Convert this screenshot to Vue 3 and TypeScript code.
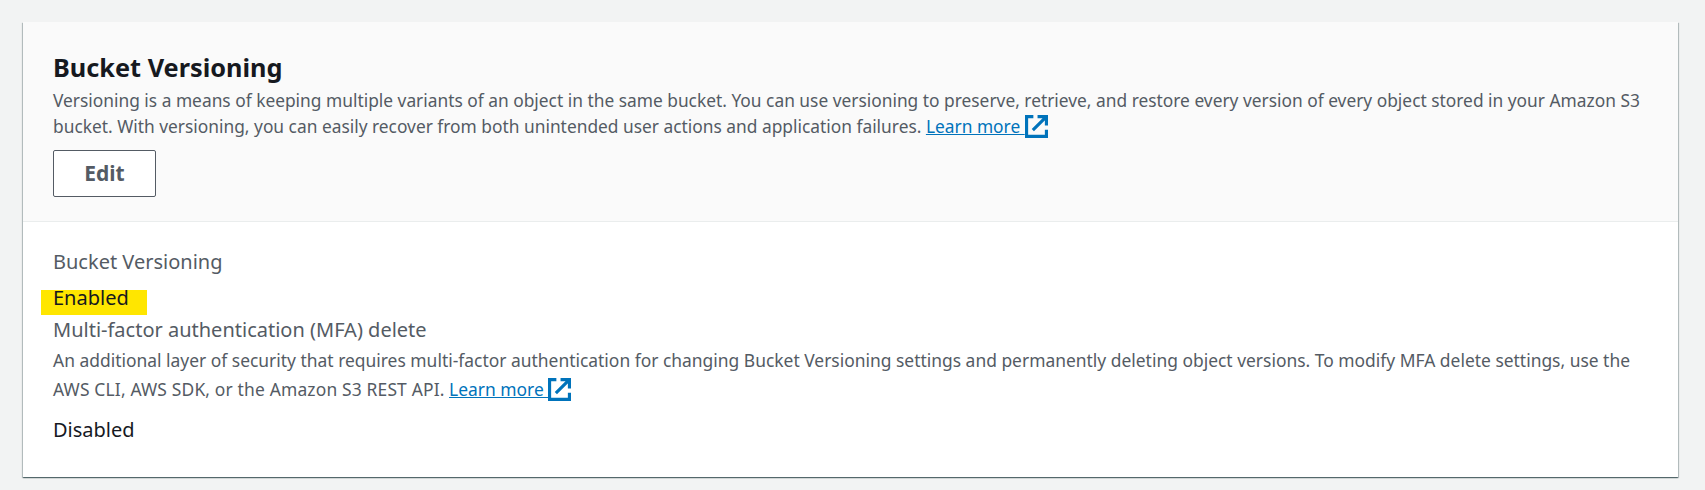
<script setup lang="ts">
const versioningText = 'Versioning is a means of keeping multiple variants of an object in the same bucket. You can use versioning to preserve, retrieve, and restore every version of every object stored in your Amazon S3 bucket. With versioning, you can easily recover from both unintended user actions and application failures.'
const mfaText = 'An additional layer of security that requires multi-factor authentication for changing Bucket Versioning settings and permanently deleting object versions. To modify MFA delete settings, use the'
const mfaTail = 'AWS CLI, AWS SDK, or the Amazon S3 REST API.'
</script>

<template>
  <div class="page">
    <section class="card">
      <header class="head">
        <h2 class="title">Bucket Versioning</h2>
        <p class="desc">{{ versioningText }} <a class="link">Learn more&nbsp;</a><svg class="ext" viewBox="0 0 22 22"><path d="M8 1.500H1.500v19h19V14M12 1.500h8.500V10M20 2 7.500 14.500" /></svg></p>
        <button class="edit">Edit</button>
      </header>
      <div class="body">
        <div class="label">Bucket Versioning</div>
        <div class="value"><span class="mark"></span><span class="marked">Enabled</span></div>
        <div class="label mfa">Multi-factor authentication (MFA) delete</div>
        <p class="desc small">{{ mfaText }} <span class="caps">{{ mfaTail }}</span> <a class="link">Learn more&nbsp;</a><svg class="ext" viewBox="0 0 22 22"><path d="M8 1.500H1.500v19h19V14M12 1.500h8.500V10M20 2 7.500 14.500" /></svg></p>
        <div class="value last">Disabled</div>
      </div>
    </section>
  </div>
</template>

<style>
html, body { margin: 0; background: #f2f3f3; }
</style>

<style scoped>
.page {
  width: 1705px;
  height: 490px;
  box-sizing: border-box;
  padding: 22px 27px 0 23px;
  background: #f2f3f3;
  font-family: "Noto Sans", sans-serif;
  overflow: hidden;
}
.card {
  height: 455px;
  background: #fff;
  box-shadow: 0 1px 1px 0 rgba(0, 28, 36, 0.45), 1px 1px 1px 0 rgba(0, 28, 36, 0.2), -1px 1px 1px 0 rgba(0, 28, 36, 0.2);
  display: flex;
  flex-direction: column;
}
.head {
  height: 200px;
  box-sizing: border-box;
  padding: 27px 30px 0 30px;
  background: #fafafa;
  border-bottom: 1px solid #eaeded;
}
.title {
  margin: 0 0 2px;
  font-size: 25.300px;
  line-height: 36px;
  font-weight: 700;
  color: #16191f;
}
.desc {
  margin: 0;
  font-size: 17.350px;
  line-height: 26px;
  color: #545b64;
}
.link {
  color: #0073bb;
  text-decoration: underline;
}
.ext {
  width: 23px;
  height: 23px;
  margin-left: 0;
  vertical-align: -5px;
  fill: none;
  stroke: #0073bb;
  stroke-width: 3;
}
.edit {
  display: block;
  margin-top: 11px;
  padding: 0 0 2px;
  width: 103px;
  height: 47px;
  background: #fff;
  border: 1px solid #545b64;
  border-radius: 2px;
  font-family: inherit;
  font-size: 21px;
  font-weight: 700;
  color: #545b64;
}
.body {
  padding: 26px 30px 0 30px;
}
.label {
  font-size: 20px;
  line-height: 27px;
  color: #545b64;
}
.value {
  position: relative;
  margin-top: 9px;
  font-size: 20px;
  line-height: 27px;
  color: #16191f;
}
.marked { position: relative; }
.mark {
  position: absolute;
  left: -12px;
  top: 6px;
  width: 106px;
  height: 25px;
  background: #ffe600;
}
.mfa { margin-top: 5px; }
.small { font-size: 17.430px; line-height: 29px; margin-top: 3px; }
.caps { letter-spacing: 0.160px; }
.last { margin-top: 12px; }
</style>
